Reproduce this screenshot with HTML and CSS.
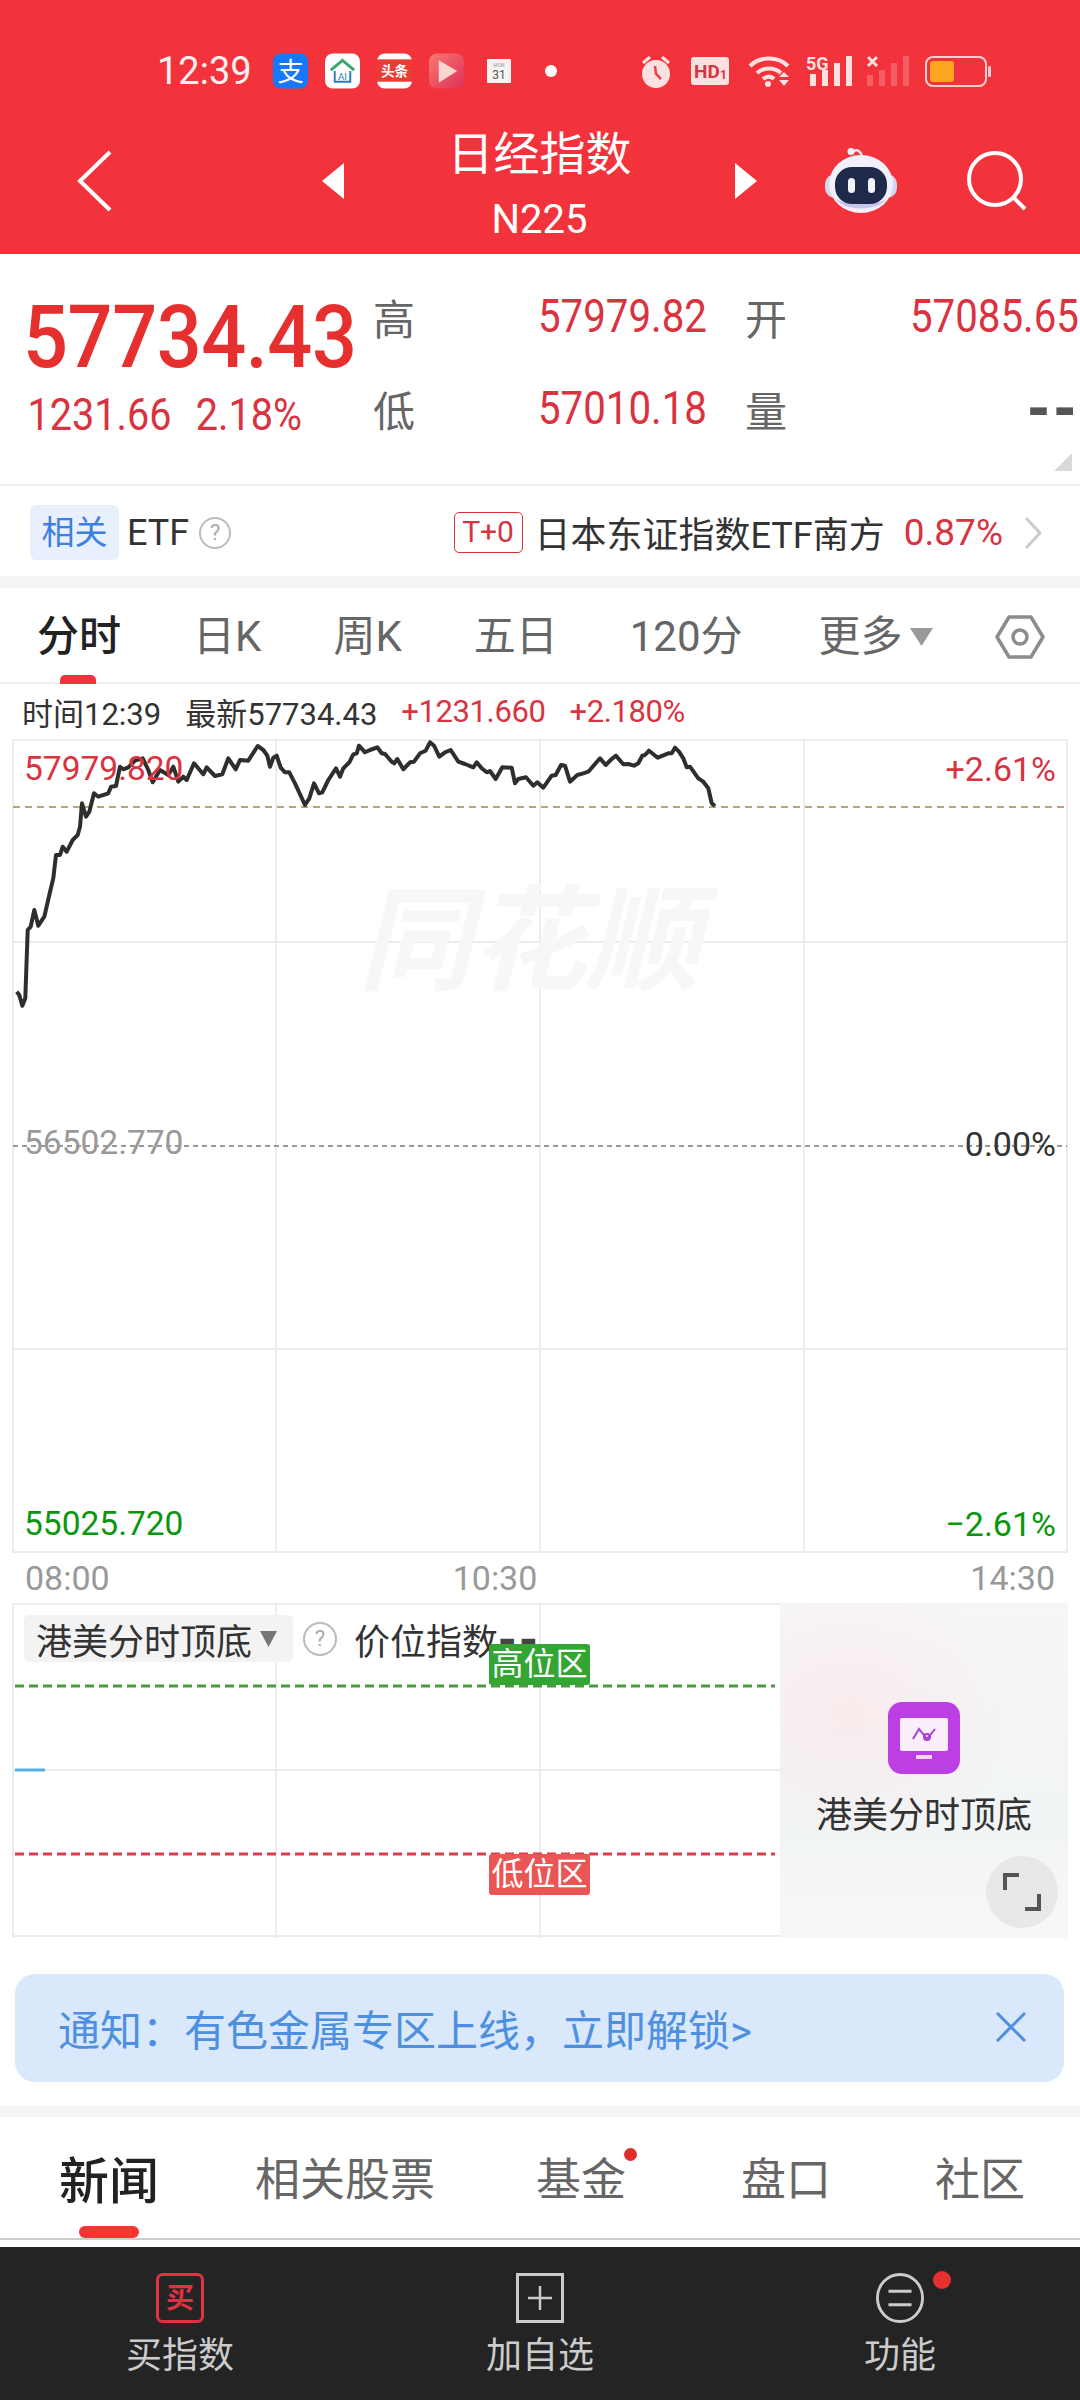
FILE: index.html
```html
<!DOCTYPE html>
<html lang="zh-CN">
<head>
  <meta charset="UTF-8" />
  <meta name="viewport" content="width=device-width, initial-scale=1.0"/>
  <title>日经指数 N225</title>
  <link rel="stylesheet" href="styles.css">
</head>
<body>

  <header class="header">
    <div class="statusbar">
      <div class="status-left">
        <span class="clock">12:39</span>
        <svg class="app" viewBox="0 0 36 36"><rect width="36" height="36" rx="8" fill="#1677ff"/><text x="18" y="28" class="app-zhi">支</text></svg>
        <svg class="app" viewBox="0 0 36 36"><rect width="36" height="36" rx="8" fill="#fff"/><path d="M6 17 18 7l12 10" fill="none" stroke="#3aa76d" stroke-width="3"/><path d="M10 18v11h16V18" fill="none" stroke="#2a7fb8" stroke-width="2"/><text x="18" y="27" class="app-ai">AI</text></svg>
        <svg class="app" viewBox="0 0 36 36"><rect width="36" height="36" rx="8" fill="#fff"/><rect y="6" width="36" height="23" fill="#ea3b35"/><text x="18" y="23" class="app-news">头条</text></svg>
        <svg class="app" viewBox="0 0 36 36"><defs><linearGradient id="playbg" x1="0" y1="0" x2="1" y2="1"><stop offset="0" stop-color="#f8796e"/><stop offset="1" stop-color="#df2f58"/></linearGradient></defs><rect width="36" height="36" rx="8" fill="url(#playbg)"/><path d="M10 7 29 18 10 30z" fill="#fbd5d0"/></svg>
        <svg class="app-cal" viewBox="0 0 24 24"><rect width="24" height="24" rx="1" fill="#f7f5f2"/><text x="12" y="8" class="cal-mon">MON</text><text x="12" y="20" class="cal-day">31</text></svg>
        <span class="status-dot"></span>
      </div>
      <div class="status-right">
        <svg class="ic-alarm" viewBox="0 0 32 33"><circle cx="16" cy="19" r="14" fill="#fde0e0"/><path d="M3 8 10 2M29 8 22 2" stroke="#fde0e0" stroke-width="3"/><path d="M15 11l1 8 5 5" fill="none" stroke="#e8434a" stroke-width="2.5"/></svg>
        <svg class="ic-hd" viewBox="0 0 38 28"><rect width="38" height="28" rx="3" fill="#fde0e0"/><text x="3" y="21" class="hd-text">HD</text><text x="29" y="22" class="hd-sub">1</text></svg>
        <svg class="ic-wifi" viewBox="0 0 42 32"><g fill="none" stroke="#fde0e0" stroke-width="4"><path d="M2 11C12 1 30 1 40 11"/><path d="M9 18c7-6 17-6 24 0"/><path d="M15 24c4-3 8-3 11 0"/></g><circle cx="20" cy="29" r="3" fill="#fde0e0"/><path d="M31 22h10l-5-5zM31 25h10l-5 6z" fill="#fde0e0"/></svg>
        <svg class="ic-sig" viewBox="0 -2 46 36"><text x="0" y="15" class="sig-text">5G</text><g fill="#fde0e0"><rect x="4" y="19" width="6" height="12"/><rect x="16" y="15" width="6" height="16"/><rect x="28" y="8" width="6" height="23"/><rect x="40" y="1" width="6" height="30"/></g></svg>
        <svg class="ic-sig2" viewBox="0 0 43 32"><path d="M1 2l9 9M10 2l-9 9" stroke="#fde0e0" stroke-width="3"/><g fill="#fde0e0" fill-opacity=".25"><rect x="0" y="20" width="6" height="11"/><rect x="12" y="15" width="6" height="16"/><rect x="24" y="8" width="6" height="23"/><rect x="36" y="1" width="6" height="30"/></g></svg>
        <svg class="ic-batt" viewBox="0 0 67 31"><rect x="1" y="1" width="60" height="29" rx="7" fill="none" stroke="#fbcfd0" stroke-width="2"/><rect x="5" y="5" width="24" height="21" rx="3" fill="#ffa51f"/><rect x="63" y="10" width="3" height="11" rx="1.5" fill="#fbcfd0"/></svg>
      </div>
    </div>

    <nav class="navbar">
      <svg class="nav-back" viewBox="0 0 35 62"><path d="M33 2 3 31l30 29" fill="none" stroke="#fff" stroke-width="4"/></svg>
      <svg class="nav-arrow-l" viewBox="0 0 22 36"><path d="M22 0v36L0 18z" fill="#fff"/></svg>
      <div class="nav-title">
        <div class="nav-name">日经指数</div>
        <div class="nav-code">N225</div>
      </div>
      <svg class="nav-arrow-r" viewBox="0 0 22 36"><path d="M0 0v36l22-18z" fill="#fff"/></svg>
      <svg class="nav-robot" viewBox="0 0 72 66">
        <path d="M28 4c4-4 9 0 9 6" fill="none" stroke="#e9e6f7" stroke-width="2.5"/>
        <circle cx="26" cy="3.5" r="3.5" fill="#f3f0fb"/>
        <rect x="0" y="26" width="72" height="24" rx="10" fill="#d6d6f2"/>
        <ellipse cx="36" cy="36" rx="32" ry="29" fill="#f2f0fb"/>
        <path d="M10 50c8 14 44 14 52 0-6 8-44 8-52 0z" fill="#c6c4ee"/>
        <rect x="10" y="19" width="52" height="37" rx="17" fill="#1f2a4a"/>
        <rect x="23" y="30" width="7" height="15" rx="3.5" fill="#f4f4fb"/>
        <rect x="43" y="30" width="7" height="15" rx="3.5" fill="#f4f4fb"/>
      </svg>
      <svg class="nav-search" viewBox="0 0 60 60"><circle cx="28" cy="28" r="26" fill="none" stroke="#fff" stroke-width="4"/><path d="M47 47l11 11" stroke="#fff" stroke-width="4"/></svg>
    </nav>
  </header>

  <section class="quote">
    <div class="price-col">
      <div class="price-main">57734.43</div>
      <div class="price-sub"><span>1231.66</span><span>2.18%</span></div>
    </div>
    <div class="stat-grid">
      <span class="stat-label">高</span><span class="stat-val">57979.82</span>
      <span class="stat-label">开</span><span class="stat-val">57085.65</span>
      <span class="stat-label">低</span><span class="stat-val">57010.18</span>
      <span class="stat-label">量</span><span class="stat-dash">--</span>
    </div>
    <span class="corner-mark"></span>
  </section>

  <section class="etf-row">
    <span class="etf-tag">相关</span>
    <span class="etf-name">ETF</span>
    <span class="help">?</span>
    <div class="etf-right">
      <span class="t0">T+0</span>
      <span class="etf-fund">日本东证指数ETF南方</span>
      <span class="etf-pct">0.87%</span>
      <svg class="etf-chev" viewBox="0 0 18 32"><path d="M2 1l14 15L2 31" fill="none" stroke="#ccc" stroke-width="3"/></svg>
    </div>
  </section>

  <div class="band"></div>

  <div class="chart-tabs">
    <span class="ctab ctab-on">分时</span>
    <span class="ctab">日K</span>
    <span class="ctab">周K</span>
    <span class="ctab">五日</span>
    <span class="ctab ctab-long">120分</span>
    <span class="ctab ctab-more">更多</span>
    <svg class="more-tri" viewBox="0 0 23 18"><path d="M0 0h23L11.500 18z" fill="#999"/></svg>
    <svg class="tab-hex" viewBox="0 0 50 44"><path d="M14 2h22l12 20-12 20H14L2 22z" fill="none" stroke="#8c8c8c" stroke-width="3.500" stroke-linejoin="round"/><circle cx="25" cy="22" r="7" fill="none" stroke="#8c8c8c" stroke-width="3.500"/></svg>
  </div>

  <div class="tick-info">
    <span>时间12:39</span>
    <span>最新57734.43</span>
    <span class="red tick-num">+1231.660</span>
    <span class="red tick-num">+2.180%</span>
  </div>

  <div class="chart">
    <svg class="chart-svg" viewBox="12 739 1056 814">
      <g stroke="#ececec" stroke-width="2" fill="none">
        <rect x="13" y="740" width="1054" height="812"/>
        <path d="M276 740v812M540 740v812M804 740v812M13 942h1054M13 1349h1054"/>
      </g>
      <path d="M13 807h1054" stroke="#b7a67c" stroke-width="2" stroke-dasharray="7 5" fill="none"/>
      <path d="M13 1146h1054" stroke="#999" stroke-width="2" stroke-dasharray="5 4" fill="none"/>
      <polyline class="price-line" points="16.700,991.700 19.300,995 22.300,1005.700 25.300,998.300 27.700,930 30.700,926.700 34.300,910 38.300,925.700 44.300,916.700 49.300,895 53.300,878.300 56,855 60,855 62.700,846.700 66.700,851.700 72.700,840 77.700,835 80,826.700 82,803.300 86,816.700 89.300,811.700 94,793.300 98.300,796.700 108.300,793.300 111,786.700 116,786 120,766.700 123.300,769.300 128.300,767.300 135,760.700 142.700,758.300 148.300,770 152.700,782.300 160,770 168.300,775 173.300,766.700 178.300,781.700 183.300,776.700 186.700,780 194,763.300 203.300,774.300 206.700,767.300 215,776 222.300,774.300 228.300,758.300 235.700,769.300 240,760 248.300,760.700 257.700,746 263.300,750 267.300,755.700 270,766.700 273.300,757.700 276.700,755.700 280.700,767.700 285,772.300 289.300,772.300 295,783.300 305,805 309.300,798.300 314,783.300 319,793.300 322.300,792.300 328.300,780 336,768.300 340,776.700 343.300,768.300 349.300,762.300 353.300,754.300 356.700,753.300 359,745.700 365,752.300 370,750 377.300,747.300 381.700,753.300 385,754 391.700,761.700 394.300,763.300 397.300,759 403.300,769.300 410,762.300 414,761.700 420,753.300 425.700,750.700 430,742.300 434,745.700 439.300,756.700 445,752.300 450.700,750 458.300,761.700 465,764 473.300,767.300 476.700,762.300 481.700,768.300 486.700,772.300 490,771 495.700,779 502.300,767.300 511.700,767.700 515,783.300 518.300,779 526,777.300 533.300,785.700 537.300,782.300 543.300,787.700 551.700,775.700 555.700,775 561,765 565,765.700 570,781.700 577.300,775 583.300,773.300 588.300,771.700 600,758.300 605.700,765 611.700,759 616,755.700 623.300,764.300 628.300,764 634,765.700 638.300,763.300 642.300,755.700 645,755 649,750.700 657.700,757.700 668.300,753.300 671.700,753.300 675,747.700 679,751.700 683.300,758.300 686.700,767.300 690,766.700 698.300,778.300 703.300,781.700 708.300,788.300 711.700,803.300 715,806"/>
    </svg>
    <div class="watermark">同花顺</div>
    <span class="lab lab-left lab-top-l red">57979.820</span>
    <span class="lab lab-top-r red">+2.61%</span>
    <span class="lab lab-left lab-mid-l grey">56502.770</span>
    <span class="lab lab-mid-r dark">0.00%</span>
    <span class="lab lab-left lab-bot-l green">55025.720</span>
    <span class="lab lab-bot-r green">−2.61%</span>
  </div>

  <div class="time-axis">
    <span>08:00</span><span class="time-mid">10:30</span><span class="time-end">14:30</span>
  </div>

  <div class="sub-chart">
    <div class="sub-main">
      <svg class="sub-svg" viewBox="0 0 768 335">
        <g stroke="#ececec" stroke-width="2" fill="none">
          <path d="M1 0v335M264 0v335M528 0v335M0 1h768M0 167h768M0 333h768"/>
        </g>
        <path d="M3 83h760" stroke="#4c9a40" stroke-width="3" stroke-dasharray="9 5" fill="none"/>
        <path d="M3 251h760" stroke="#d8404a" stroke-width="3" stroke-dasharray="9 5" fill="none"/>
        <path d="M3 167h30" stroke="#55aee6" stroke-width="3" fill="none"/>
      </svg>
      <div class="sub-head">
        <span class="sub-select">港美分时顶底<svg class="sub-tri" viewBox="0 0 17 16"><path d="M0 0h17L8.500 16z" fill="#777"/></svg></span>
        <span class="help help-sub">?</span>
        <span class="sub-index">价位指数<b class="sub-dash">--</b></span>
      </div>
      <span class="zone zone-high">高位区</span>
      <span class="zone zone-low">低位区</span>
    </div>
    <div class="promo">
      <svg class="promo-icon" viewBox="0 0 72 72">
        <rect width="72" height="72" rx="14" fill="#bb3fe2"/>
        <rect x="12" y="16" width="48" height="33" rx="2" fill="#fbeefc"/>
        <rect x="28" y="53" width="16" height="4" fill="#f3d6f8"/>
        <path d="M25 37l6-10 8 10 8-10" fill="none" stroke="#a93fd0" stroke-width="2"/>
        <circle cx="39" cy="35" r="3" fill="none" stroke="#a93fd0" stroke-width="2"/>
      </svg>
      <div class="promo-name">港美分时顶底</div>
      <span class="expand">
        <svg viewBox="0 0 38 38"><path d="M16 2H2v15M22 36h14V21" fill="none" stroke="#555" stroke-width="4"/></svg>
      </span>
    </div>
  </div>

  <div class="notice">
    <span>通知：有色金属专区上线，立即解锁&gt;</span>
    <svg class="notice-x" viewBox="0 0 30 30"><path d="M1 1l28 28M29 1 1 29" stroke="#4d8fe0" stroke-width="3"/></svg>
  </div>

  <div class="band band-thin"></div>

  <div class="news-tabs">
    <span class="ntab ntab-on">新闻</span>
    <span class="ntab ntab-stock">相关股票</span>
    <span class="ntab ntab-fund">基金<i class="dot"></i></span>
    <span class="ntab ntab-pan">盘口</span>
    <span class="ntab ntab-club">社区</span>
  </div>

  <footer class="bottom-nav">
    <div class="bn-item">
      <svg class="bn-icon" viewBox="0 0 48 50"><rect x="1.500" y="1.500" width="45" height="47" rx="5" fill="none" stroke="#e03041" stroke-width="3"/><text x="24" y="35" class="bn-buy">买</text></svg>
      <span>买指数</span>
    </div>
    <div class="bn-item">
      <svg class="bn-icon" viewBox="0 0 48 50"><rect x="1.500" y="1.500" width="45" height="47" fill="none" stroke="#ccc" stroke-width="3"/><path d="M24 13v24M12 25h24" stroke="#ccc" stroke-width="2.500"/></svg>
      <span>加自选</span>
    </div>
    <div class="bn-item">
      <svg class="bn-icon" viewBox="0 0 50 52"><ellipse cx="25" cy="26" rx="23.500" ry="24.500" fill="none" stroke="#ccc" stroke-width="3"/><path d="M13 19h24M13 33h24" stroke="#ccc" stroke-width="3"/></svg>
      <span>功能</span>
      <i class="bn-dot"></i>
    </div>
  </footer>

</body>
</html>
```

FILE: styles.css
```css
* {
  box-sizing: border-box;
}

body {
  margin: 0;
  width: 1080px;
  height: 2400px;
  overflow: hidden;
  background: #fff;
  color: #333;
  font-family: Roboto, "Noto Sans CJK SC", sans-serif;
}

.red { color: #d9333f; }
.grey { color: #999; }
.dark { color: #333; }
.green { color: #0a960f; }

/* header */
.header {
  height: 254px;
  background: #f3333c;
  color: #fff;
}

.statusbar {
  display: flex;
  justify-content: space-between;
  align-items: center;
  height: 36px;
  padding: 0 88px 0 157px;
  position: relative;
  top: 53px;
}

.status-left, .status-right {
  display: flex;
  align-items: center;
}

.clock {
  font-size: 38px;
  width: 116px;
  color: #fdf0f0;
}

.app {
  width: 35px;
  height: 36px;
  margin-right: 17px;
}

.app-cal {
  width: 24px;
  height: 24px;
  margin-left: 6px;
}

.status-dot {
  width: 12px;
  height: 12px;
  margin-left: 34px;
  border-radius: 50%;
  background: #fff;
}

.app-zhi { font-size: 27px; fill: #fff; text-anchor: middle; }
.app-ai { font-size: 10px; fill: #2a7fb8; text-anchor: middle; }
.app-news { font-size: 14px; fill: #fff; text-anchor: middle; font-weight: 700; }
.cal-mon { font-size: 5px; fill: #999; text-anchor: middle; }
.cal-day { font-size: 12px; fill: #555; text-anchor: middle; }
.hd-text { font-size: 19px; font-weight: 700; fill: #d9333f; }
.hd-sub { font-size: 12px; font-weight: 700; fill: #d9333f; }
.sig-text { font-size: 18px; font-weight: 700; fill: #fde0e0; }

.ic-alarm { width: 32px; height: 33px; margin-right: 19px; }
.ic-hd { width: 38px; height: 28px; margin-right: 19px; }
.ic-wifi { width: 42px; height: 32px; margin-right: 16px; }
.ic-sig { width: 46px; height: 36px; margin-right: 15px; }
.ic-sig2 { width: 43px; height: 32px; margin-right: 15px; }
.ic-batt { width: 67px; height: 31px; }

.navbar {
  display: flex;
  align-items: center;
  height: 165px;
  padding-left: 77px;
  margin-top: 53px;
  padding-top: 19px;
}

.nav-back { width: 35px; height: 62px; }
.nav-arrow-l { width: 22px; height: 36px; margin-left: 210px; }
.nav-arrow-r { width: 22px; height: 36px; }

.nav-title {
  width: 391px;
  margin-top: 8px;
  text-align: center;
}

.nav-name {
  font-size: 46px;
  line-height: 60px;
}

.nav-code {
  font-size: 40px;
  line-height: 52px;
  margin-top: 10px;
}

.nav-robot { width: 72px; height: 66px; margin-left: 68px; }
.nav-search { width: 60px; height: 60px; margin-left: 70px; }

/* quote block, the device font is narrower than Roboto so numbers get squeezed */
.quote {
  display: flex;
  position: relative;
  height: 232px;
  border-bottom: 2px solid #eee;
}

.price-col {
  width: 373px;
  padding: 37px 0 0 23px;
  color: #e6302f;
}

.price-main {
  font-size: 88px;
  line-height: 92px;
  font-weight: 500;
  letter-spacing: -.5px;
  transform: scaleX(.9);
  transform-origin: left;
}

.price-sub {
  display: flex;
  gap: 27px;
  margin-top: 7px;
  padding-left: 5px;
  font-size: 44px;
  line-height: 50px;
  color: #d9333f;
  transform: scaleX(.9);
  transform-origin: left;
}

.stat-grid {
  display: grid;
  grid-template-columns: 165px 207px 165px 170px;
  grid-auto-rows: 92px;
  align-items: center;
  padding-top: 16px;
}

.stat-label {
  font-size: 42px;
  color: #666;
}

.stat-val {
  font-size: 46px;
  color: #d9333f;
  white-space: nowrap;
  transform: scaleX(.875);
  transform-origin: left;
}

.stat-dash {
  font-family: "DejaVu Sans", sans-serif;
  font-size: 54px;
  font-weight: 700;
  letter-spacing: 4px;
  text-align: right;
  margin-right: 0;
  color: #555;
}

.corner-mark {
  position: absolute;
  right: 8px;
  top: 199px;
  width: 18px;
  height: 18px;
  background: #d9d9d9;
  clip-path: polygon(100% 0, 100% 100%, 0 100%);
}

/* related etf */
.etf-row {
  display: flex;
  align-items: center;
  height: 90px;
  padding: 3px 38px 0 30px;
}

.etf-tag {
  width: 89px;
  height: 55px;
  line-height: 55px;
  text-align: center;
  font-size: 33px;
  color: #3f7fe0;
  background: #e8f0fe;
  border-radius: 6px;
  margin-top: -1px;
}

.etf-name {
  margin-left: 8px;
  font-size: 36px;
  color: #333;
}

.help {
  width: 32px;
  height: 32px;
  margin-left: 10px;
  line-height: 28px;
  text-align: center;
  font-size: 22px;
  color: #aaa;
  border: 2px solid #bbb;
  border-radius: 50%;
}

.etf-right {
  display: flex;
  align-items: center;
  margin-left: auto;
}

.t0 {
  width: 69px;
  height: 41px;
  line-height: 38px;
  text-align: center;
  font-size: 30px;
  color: #d9333f;
  border: 1.5px solid #d9333f;
  border-radius: 5px;
}

.etf-fund {
  margin-left: 12px;
  margin-top: -2px;
  font-size: 36px;
  color: #333;
}

.etf-pct {
  margin-left: 19px;
  font-size: 37px;
  color: #d9333f;
}

.etf-chev {
  width: 18px;
  height: 32px;
  margin-left: 21px;
}

.band {
  height: 12px;
  background: #f5f5f5;
}

.band-thin {
  height: 11px;
}

/* chart tabs */
.chart-tabs {
  display: flex;
  align-items: center;
  height: 96px;
  padding: 4px 35px 0 37px;
  border-bottom: 2px solid #eee;
}

.ctab {
  position: relative;
  font-size: 42px;
  line-height: 56px;
  color: #666;
  margin-right: 72px;
}

.ctab-long {
  margin-right: 76px;
}

.ctab-more {
  margin-right: 7px;
}

.ctab-on {
  color: #222;
  font-weight: 500;
}

.ctab-on::after {
  content: "";
  position: absolute;
  left: 23px;
  bottom: -19px;
  width: 36px;
  height: 9px;
  border-radius: 5px 5px 0 0;
  background: #f3333c;
}

.more-tri {
  width: 23px;
  height: 18px;
}

.tab-hex {
  width: 50px;
  height: 44px;
  margin-left: auto;
}

.tick-info {
  display: flex;
  align-items: center;
  gap: 24px;
  height: 55px;
  padding-left: 22px;
  font-size: 31px;
  color: #333;
}

.tick-num {
  letter-spacing: -.4px;
}

/* main chart, labels sit on top of the grid */
.chart {
  position: relative;
  height: 814px;
  margin-left: 12px;
  width: 1056px;
  overflow: hidden;
}

.chart-svg {
  display: block;
  width: 1056px;
  height: 814px;
}

.price-line {
  fill: none;
  stroke: #2e2e2e;
  stroke-width: 4px;
  stroke-linejoin: round;
}

.watermark {
  position: absolute;
  left: 346px;
  top: 133px;
  font-size: 114px;
  line-height: 140px;
  font-weight: 700;
  font-style: italic;
  color: #f7f7f7;
  white-space: nowrap;
}

.lab {
  position: absolute;
  font-size: 34px;
  line-height: 40px;
}

.lab-left { font-size: 33.5px; }

.lab-top-l { left: 12px; top: 10px; }
.lab-top-r { right: 12px; top: 10px; }
.lab-mid-l { left: 12px; top: 384px; }
.lab-mid-r { right: 12px; top: 385px; }
.lab-bot-l { left: 12px; top: 765px; }
.lab-bot-r { right: 12px; top: 765px; }

.time-axis {
  display: flex;
  align-items: center;
  height: 50px;
  padding: 0 25px;
  font-size: 34px;
  color: #999;
}

.time-mid {
  margin-left: 343px;
}

.time-end {
  margin-left: auto;
}

/* indicator panel */
.sub-chart {
  display: flex;
  height: 335px;
  margin-left: 12px;
  width: 1056px;
}

.sub-main {
  position: relative;
  width: 768px;
}

.sub-svg {
  position: absolute;
  left: 0;
  top: 0;
  width: 768px;
  height: 335px;
}

.sub-head {
  position: relative;
  display: flex;
  align-items: center;
  padding: 12px 0 0 12px;
  height: 59px;
}

.sub-select {
  display: flex;
  align-items: center;
  height: 47px;
  padding: 0 14px 0 12px;
  font-size: 36px;
  color: #333;
  background: #f3f3f3;
  border-radius: 5px;
  width: 269px;
}

.sub-tri {
  width: 17px;
  height: 16px;
  margin-left: 8px;
}

.help-sub {
  width: 34px;
  height: 34px;
  line-height: 30px;
}

.sub-index {
  margin-left: 17px;
  font-size: 36px;
  color: #333;
  white-space: nowrap;
}

.sub-dash {
  font-family: "DejaVu Sans", sans-serif;
  font-size: 44px;
  letter-spacing: 3px;
  color: #444;
}

.zone {
  position: absolute;
  left: 477px;
  width: 101px;
  height: 41px;
  line-height: 40px;
  text-align: center;
  font-size: 32px;
  color: #fff;
  border-radius: 3px;
}

.zone-high { top: 41px; background: #33a533; }
.zone-low { top: 251px; background: #ea5555; }

.promo {
  position: relative;
  flex: 1;
  display: flex;
  flex-direction: column;
  align-items: center;
  padding-top: 99px;
  background:
    radial-gradient(ellipse 170px 130px at 70px 110px, rgba(250,230,232,.7), rgba(250,230,232,0)),
    linear-gradient(#f7f6f6, #f1f4f5 65%, #f7f7f8);
}

.promo-icon {
  width: 72px;
  height: 72px;
}

.promo-name {
  margin-top: 15px;
  font-size: 36px;
  line-height: 54px;
  color: #333;
}

.expand {
  position: absolute;
  right: 10px;
  bottom: 10px;
  display: flex;
  align-items: center;
  justify-content: center;
  width: 72px;
  height: 72px;
  border-radius: 50%;
  background: #e8e8e8;
}

.expand svg {
  width: 38px;
  height: 38px;
}

/* notice */
.notice {
  display: flex;
  align-items: center;
  justify-content: space-between;
  height: 108px;
  margin: 36px 16px 24px 15px;
  padding: 0 38px 2px 43px;
  font-size: 42px;
  color: #4d8fe0;
  background: #d9e8fb;
  border-radius: 20px;
}

.notice-x {
  width: 30px;
  height: 30px;
}

/* news tabs */
.news-tabs {
  display: flex;
  align-items: center;
  height: 123px;
  padding: 0 0 2px 59px;
  margin-bottom: 7px;
  border-bottom: 2px solid #ccc;
  font-size: 45px;
  color: #666;
}

.ntab {
  position: relative;
}

.ntab-on {
  font-size: 50px;
  font-weight: 500;
  color: #222;
}

.ntab-on::after {
  content: "";
  position: absolute;
  left: 20px;
  bottom: -25px;
  width: 60px;
  height: 12px;
  border-radius: 6px;
  background: #f5352f;
}

.ntab-stock { margin-left: 96px; }
.ntab-fund { margin-left: 101px; }
.ntab-pan { margin-left: 115px; }
.ntab-club { margin-left: 104px; }

.dot {
  position: absolute;
  right: -11px;
  top: 4px;
  width: 13px;
  height: 13px;
  border-radius: 50%;
  background: #e02b2b;
}

/* bottom nav */
.bottom-nav {
  display: grid;
  grid-template-columns: 360px 360px 360px;
  height: 153px;
  padding-top: 26px;
  background: #242424;
  font-size: 36px;
  color: #ccc;
}

.bn-item {
  position: relative;
  display: flex;
  flex-direction: column;
  align-items: center;
  gap: 8px;
}

.bn-item span {
  line-height: 50px;
}

.bn-icon {
  width: 48px;
  height: 50px;
}

.bn-buy {
  font-size: 28px;
  font-weight: 700;
  fill: #e03041;
  text-anchor: middle;
}

.bn-dot {
  position: absolute;
  left: 213px;
  top: -2px;
  width: 18px;
  height: 18px;
  border-radius: 50%;
  background: #e5312f;
}
```
